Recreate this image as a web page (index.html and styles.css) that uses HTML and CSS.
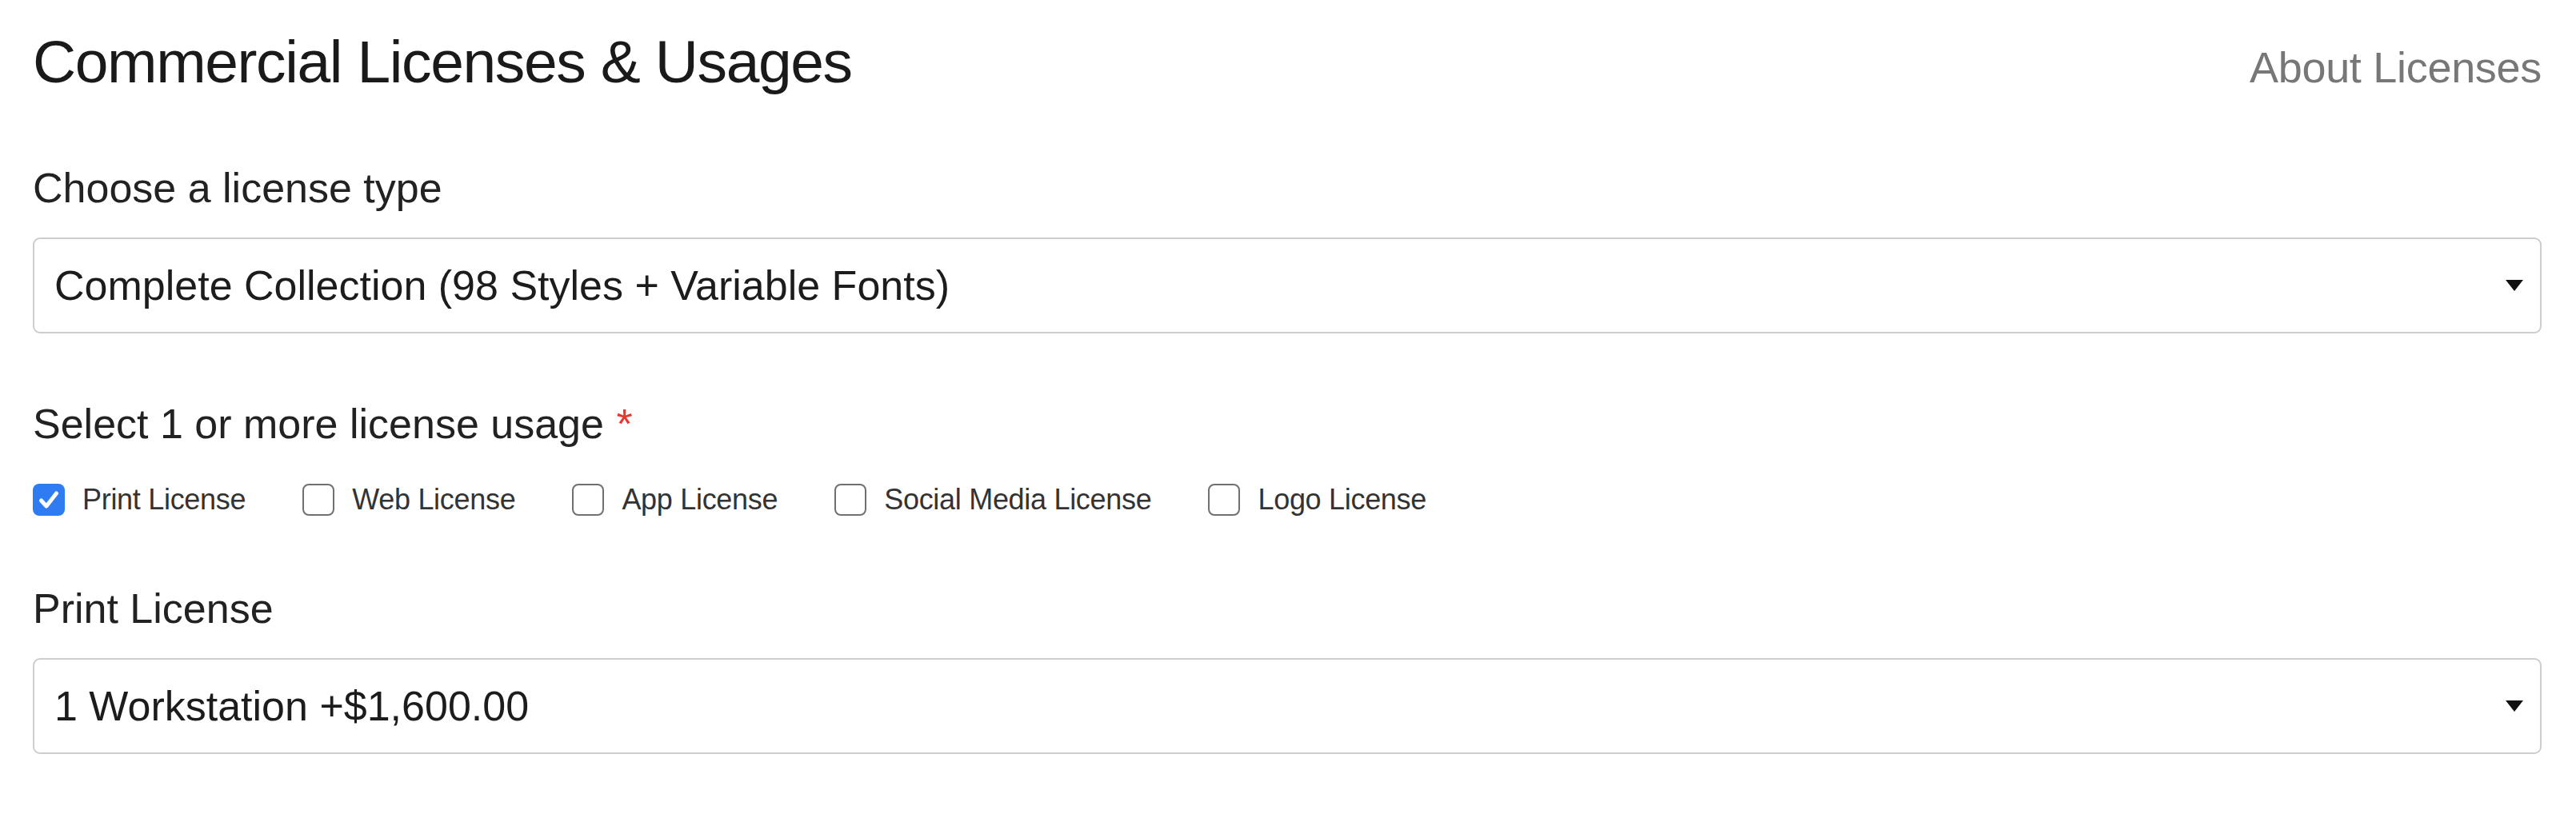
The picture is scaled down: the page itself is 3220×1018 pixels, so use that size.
FILE: index.html
```html
<!DOCTYPE html>
<html lang="en">
<head>
<meta charset="utf-8">
<title>Commercial Licenses &amp; Usages</title>
<link rel="stylesheet" href="styles.css">
</head>
<body>
<main class="panel">
  <header class="head">
    <h2 class="title">Commercial Licenses &amp; Usages</h2>
    <a class="about" href="#">About Licenses</a>
  </header>

  <section class="field field-type">
    <div class="label">Choose a license type</div>
    <div class="select">
      <span class="select-value">Complete Collection (98 Styles + Variable Fonts)</span>
      <svg class="caret" width="22" height="14" viewBox="0 0 22 14"><path d="M0 0 H22 L11 14 Z" fill="#111"/></svg>
    </div>
  </section>

  <section class="field field-usage">
    <div class="label label-usage">Select 1 or more license usage <span class="req">*</span></div>
    <div class="checks">
      <label class="check">
        <span class="box box-on"><svg width="40" height="40" viewBox="0 0 40 40"><path d="M10.5 21 L17 28 L29.5 12" fill="none" stroke="#fff" stroke-width="5" stroke-linecap="round" stroke-linejoin="round"/></svg></span>
        <span class="check-text">Print License</span>
      </label>
      <label class="check">
        <span class="box"></span>
        <span class="check-text">Web License</span>
      </label>
      <label class="check">
        <span class="box"></span>
        <span class="check-text">App License</span>
      </label>
      <label class="check">
        <span class="box"></span>
        <span class="check-text">Social Media License</span>
      </label>
      <label class="check">
        <span class="box"></span>
        <span class="check-text">Logo License</span>
      </label>
    </div>
  </section>

  <section class="field field-print">
    <div class="label">Print License</div>
    <div class="select">
      <span class="select-value">1 Workstation +$1,600.00</span>
      <svg class="caret" width="22" height="14" viewBox="0 0 22 14"><path d="M0 0 H22 L11 14 Z" fill="#111"/></svg>
    </div>
  </section>
</main>
</body>
</html>
```

FILE: styles.css
```css
* { box-sizing: border-box; }

html, body {
  margin: 0;
  padding: 0;
  background: #ffffff;
}

body {
  font-family: "Liberation Sans", Arial, Helvetica, sans-serif;
  color: #1f1f1f;
}

.panel {
  padding: 31px 43px 0 41px;
}

.head {
  display: flex;
  justify-content: space-between;
  align-items: baseline;
  margin-bottom: 80px;
}

.title {
  margin: 0;
  font-size: 75px;
  line-height: 92px;
  font-weight: 400;
  letter-spacing: -1.4px;
  color: #1a1a1a;
}

.about {
  font-size: 54px;
  line-height: 64px;
  letter-spacing: -0.3px;
  color: #777777;
  text-decoration: none;
}

.label {
  font-size: 52px;
  line-height: 64px;
  color: #222222;
  margin-bottom: 30px;
}

.label-usage {
  margin-bottom: 43px;
}

.req {
  color: #e8372e;
  margin-left: 1px;
}

.field-type {
  margin-bottom: 81px;
}

.field-usage {
  margin-bottom: 84px;
}

.select {
  display: flex;
  align-items: center;
  justify-content: space-between;
  height: 120px;
  border: 2px solid #cdcdcd;
  border-radius: 9px;
  padding: 0 21px 0 25px;
  background: #fff;
}

.select-value {
  font-size: 52px;
  line-height: 64px;
  color: #1c1c1c;
}

.caret {
  display: block;
  flex: none;
}

.checks {
  display: flex;
  align-items: center;
}

.check {
  display: flex;
  align-items: center;
  gap: 22px;
  margin-right: 71px;
}

.box {
  width: 40px;
  height: 40px;
  border: 2.5px solid #707070;
  border-radius: 8px;
  background: #fff;
  flex: none;
}

.box-on {
  border: none;
  background: #2f7bf2;
}

.box-on svg {
  display: block;
}

.check-text {
  font-size: 36px;
  line-height: 40px;
  letter-spacing: -0.3px;
  color: #333333;
}
```
